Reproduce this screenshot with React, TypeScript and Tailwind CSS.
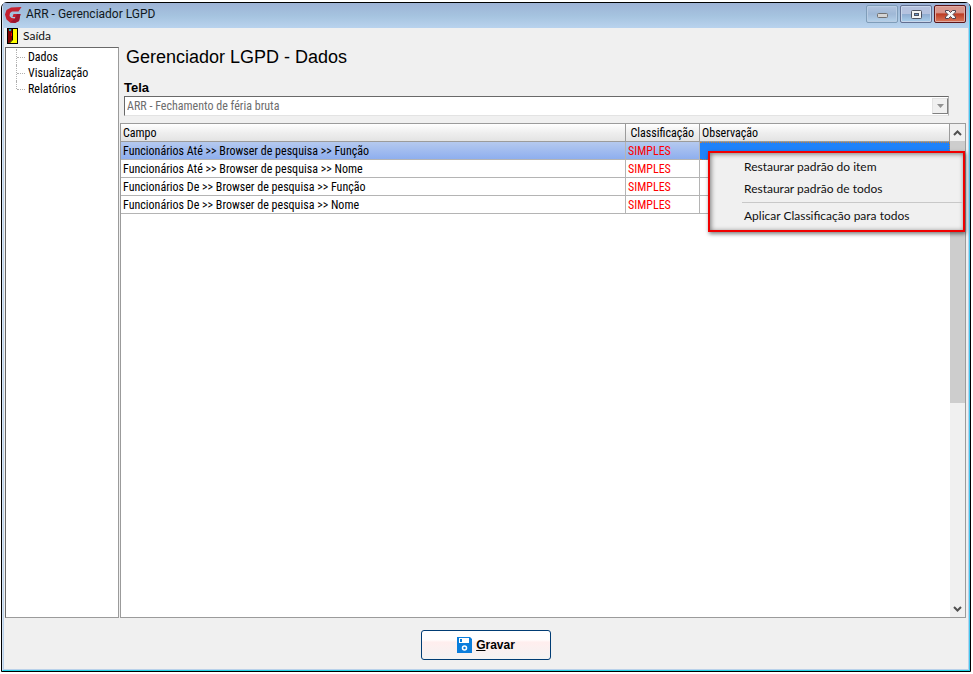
import React from 'react';

interface FieldRow {
  campo: string;
  classificacao: string;
}

const ROWS: FieldRow[] = [
  { campo: 'Funcionários Até >> Browser de pesquisa >> Função', classificacao: 'SIMPLES' },
  { campo: 'Funcionários Até >> Browser de pesquisa >> Nome', classificacao: 'SIMPLES' },
  { campo: 'Funcionários De >> Browser de pesquisa >> Função', classificacao: 'SIMPLES' },
  { campo: 'Funcionários De >> Browser de pesquisa >> Nome', classificacao: 'SIMPLES' },
];

const TREE_ITEMS = ['Dados', 'Visualização', 'Relatórios'];

const TitleBar: React.FC = () => (
  <header className="flex h-[25px] shrink-0 items-start bg-linear-to-b from-[#9db3d6] via-[#a5c3df] to-[#b9d3ee] pl-[2px] pr-[3px]">
    <svg className="mt-1 h-4 w-[17px]" viewBox="0 0 17 16" aria-hidden="true">
      <path d="M16.500 0 6 .500 1.500 3 0 7.500 1.500 12.500 5 15.500l5 .5 4-2L15.500 7H8.500L7.500 10h3l-.5 1.500-3.500-.500-2-2 .5-3 2-1.500h6.500z" fill="#c4202f" />
      <path d="M15.500 7 14 14l-4 2-5-.500 5-4 .5-1.500L12 7z" fill="#9c1530" />
    </svg>
    <h1 className="ml-1 mt-[2px] flex-1 font-['Roboto',sans-serif] text-[12px] leading-[18px] text-[#101820]">
      ARR - Gerenciador LGPD
    </h1>
    <div className="mt-[2px] flex gap-[2px]">
      <button
        type="button"
        aria-label="Minimizar"
        className="flex h-[18px] w-8 items-center justify-center rounded-[2px] border border-[#7f9db9] bg-linear-to-b from-[#b3c4df] via-[#9fb8d6] to-[#b5d2ea] shadow-[inset_0_0_0_1px_#b9cde4]"
      >
        <svg className="mt-[2px] h-[5px] w-[11px]" viewBox="0 0 11 5">
          <rect x=".5" y=".5" width="10" height="4" rx="1" fill="#d4d4d4" stroke="#707070" />
        </svg>
      </button>
      <button
        type="button"
        aria-label="Maximizar"
        className="flex h-[18px] w-8 items-center justify-center rounded-[2px] border border-[#626f91] bg-linear-to-b from-[#b5c2df] from-50% via-[#8fabd0] via-50% to-[#a9cfec] shadow-[inset_0_0_0_1px_#c8d6ea]"
      >
        <svg className="h-[9px] w-[11px]" viewBox="0 0 11 9">
          <rect x=".5" y=".5" width="10" height="8" rx="1" fill="#f4f4f4" stroke="#4d5261" />
          <rect x="3.500" y="3.500" width="4" height="2" fill="#6d98c9" stroke="#4d5261" />
        </svg>
      </button>
      <button
        type="button"
        aria-label="Fechar"
        className="flex h-[18px] w-8 items-center justify-center rounded-[2px] border border-[#5c1519] bg-linear-to-b from-[#d9978d] from-40% via-[#bd3c24] via-50% to-[#d9785a] shadow-[inset_0_0_0_1px_#e0aaa2]"
      >
        <svg className="h-[9px] w-[11px]" viewBox="0 0 11 9">
          <path d="M.5.5h3l2 2 2-2h3v1.500L8 4.500l2.500 2.500v1.500h-3l-2-2-2 2h-3V7L3 4.500.500 2z" fill="#f6f6f6" stroke="#4d4450" />
        </svg>
      </button>
    </div>
  </header>
);

const MenuBar: React.FC = () => (
  <nav className="flex h-[19px] shrink-0 items-start pl-[3px]">
    <button type="button" className="flex items-center gap-[5px] font-['Lato',sans-serif] text-[12px] leading-4 text-[#101010]">
      <svg className="h-4 w-[11px]" viewBox="0 0 11 16" aria-hidden="true">
        <rect x=".5" y=".5" width="10" height="15" fill="#ffff00" stroke="#000" />
        <path d="M1 1h4v11l-3 3H1z" fill="#800000" />
        <path d="M2 1h2v2H2z" fill="#00c0c0" />
        <path d="M5.500 1v11l-3 3" fill="none" stroke="#000" />
        <path d="M4.500 5v3" stroke="#ff0000" />
      </svg>
      Saída
    </button>
  </nav>
);

const TreePanel: React.FC = () => (
  <aside className="w-[114px] shrink-0 border border-[#9b9b9b] border-l-[#696969] border-t-[#696969] bg-white pl-[10px] pt-[1px]">
    <ul className="text-[12px] leading-4">
      {TREE_ITEMS.map((item, i) => (
        <li key={item} className="flex h-4">
          <span className={`border-l border-dotted border-[#b0b0b0] ${i === TREE_ITEMS.length - 1 ? 'h-2' : 'h-4'}`} />
          <span className="mr-[3px] mt-2 h-px w-2 border-t border-dotted border-[#b0b0b0]" />
          <button type="button" className="whitespace-nowrap leading-4">{item}</button>
        </li>
      ))}
    </ul>
  </aside>
);

const ScrollBar: React.FC = () => (
  <div className="flex w-[15px] shrink-0 flex-col bg-[#f0f0f0]">
    <button type="button" aria-label="Rolar para cima" className="flex h-[17px] items-center justify-center">
      <svg className="h-[6px] w-[9px]" viewBox="0 0 9 6">
        <path d="m1 5 3.500-3.500L8 5" fill="none" stroke="#505050" strokeWidth="2" />
      </svg>
    </button>
    <div className="flex-1">
      <div className="h-[57%] bg-[#cdcdcd]" />
    </div>
    <button type="button" aria-label="Rolar para baixo" className="flex h-[17px] items-center justify-center">
      <svg className="h-[6px] w-[9px]" viewBox="0 0 9 6">
        <path d="m1 1 3.500 3.500L8 1" fill="none" stroke="#505050" strokeWidth="2" />
      </svg>
    </button>
  </div>
);

const ContextMenu: React.FC = () => (
  <div
    role="menu"
    className="absolute right-0 top-[27px] w-[257px] border-2 border-[#f00000] bg-[#f0f0f0] py-[3px] font-['Lato',sans-serif] text-[12px] text-[#101010] shadow-[1px_2px_4px_rgba(0,0,0,0.5),inset_1px_1px_5px_rgba(0,0,0,0.5)]"
  >
    <button type="button" role="menuitem" className="block h-[22px] w-full pl-[34px] text-left">
      Restaurar padrão do item
    </button>
    <button type="button" role="menuitem" className="block h-[22px] w-full pl-[34px] text-left">
      Restaurar padrão de todos
    </button>
    <hr className="my-[2px] ml-8 border-[#c8c8c8]" />
    <button type="button" role="menuitem" className="block h-[22px] w-full pl-[34px] text-left">
      Aplicar Classificação para todos
    </button>
  </div>
);

const DataGrid: React.FC = () => (
  <div className="relative mt-[7px] flex flex-1 border border-[#9b9b9b] bg-white">
    <div className="flex-1">
      <table className="w-full table-fixed border-separate border-spacing-0 text-[12px] leading-4">
        <colgroup>
          <col />
          <col className="w-[74px]" />
          <col className="w-[250px]" />
        </colgroup>
        <thead>
          <tr className="h-[18px] bg-linear-to-b from-white via-[#eeeeee] to-[#e2e2e2]">
            <th className="border-b border-r border-[#9b9b9b] p-0 pl-[2px] text-left font-normal">Campo</th>
            <th className="border-b border-r border-[#9b9b9b] p-0 pr-[5px] text-right font-normal">Classificação</th>
            <th className="border-b border-r border-[#9b9b9b] p-0 pl-[2px] text-left font-normal">Observação</th>
          </tr>
        </thead>
        <tbody>
          {ROWS.map((row, i) => (
            <tr key={row.campo} className={`h-[18px] ${i === 0 ? 'bg-linear-to-b from-[#b5c9ef] to-[#8cadee]' : ''}`}>
              <td className="whitespace-nowrap border-b border-r border-[#b4b4b4] p-0 pl-[2px]">{row.campo}</td>
              <td className="border-b border-r border-[#b4b4b4] p-0 pl-[2px] text-[#ff0000]">{row.classificacao}</td>
              <td
                className={`border-b border-r p-0 ${i === 0 ? 'border-t border-dotted border-[#c08040] bg-[#1e82fa]' : 'border-[#b4b4b4]'}`}
              />
            </tr>
          ))}
        </tbody>
      </table>
    </div>
    <ScrollBar />
    <ContextMenu />
  </div>
);

const App: React.FC = () => {
  return (
    <div className="flex h-screen flex-col bg-white pb-[2px] pl-px pr-[2px] pt-[2px] font-['Roboto_Condensed','Liberation_Sans',sans-serif] text-black">
      <div className="flex flex-1 flex-col rounded-t-[6px] border border-black bg-[#b9d1ea]">
        <div className="flex flex-1 flex-col rounded-t-[5px] border-b border-l border-r border-b-[#22d3e6] border-l-[#d5e3f2] border-r-[#45c8ee]">
          <TitleBar />
          <div className="mx-px mb-px flex flex-1 flex-col bg-[#f0f0f0]">
            <MenuBar />
            <main className="flex flex-1 gap-px pl-px pr-[2px]">
              <TreePanel />
              <section className="flex min-w-0 flex-1 flex-col">
                <h2 className="pl-[6px] font-['Liberation_Sans',sans-serif] text-[18px] leading-[21px]">
                  Gerenciador LGPD - Dados
                </h2>
                <label htmlFor="tela" className="mt-3 pl-1 font-['Liberation_Sans',sans-serif] text-[13px] font-bold leading-4">
                  Tela
                </label>
                <div className="relative ml-1 mr-[17px] flex">
                  <select
                    id="tela"
                    disabled
                    className="h-5 w-full appearance-none border border-b-[#e3e3e3] border-l-[#696969] border-r-[#b0b0b0] border-t-[#696969] bg-white pl-[2px] text-[12px] leading-4 text-[#6d6d6d] opacity-100"
                  >
                    <option>ARR - Fechamento de féria bruta</option>
                  </select>
                  <span className="pointer-events-none absolute bottom-[2px] right-px top-[2px] flex w-4 items-center justify-center border border-b-[#808080] border-l-[#e3e3e3] border-r-[#808080] border-t-[#e3e3e3] bg-[#f0f0f0]">
                    <svg className="h-1 w-[7px]" viewBox="0 0 7 4">
                      <path d="M0 0h7L3.500 4z" fill="#929292" />
                    </svg>
                  </span>
                </div>
                <DataGrid />
              </section>
            </main>
            <footer className="flex h-[51px] shrink-0 items-start justify-center pt-3">
              <button
                type="button"
                className="flex h-[30px] w-[130px] items-center justify-center gap-1 rounded-[3px] border border-[#003c74] bg-linear-to-b from-white from-30% via-[#ffeeee] via-40% to-[#f3f3f3] font-['Liberation_Sans',sans-serif] text-[12px] font-bold"
              >
                <svg className="h-4 w-[15px]" viewBox="0 0 15 16" aria-hidden="true">
                  <path d="M0 0h13l2 2v14H0z" fill="#0a7ddc" />
                  <path d="M2 1h10v5H2z" fill="#fff" />
                  <path d="M3 2h2v3H3z" fill="#0a7ddc" />
                  <circle cx="7.500" cy="11" r="2" fill="#0a7ddc" stroke="#fff" strokeWidth="1.500" />
                </svg>
                <span>
                  <u>G</u>ravar
                </span>
              </button>
            </footer>
          </div>
        </div>
      </div>
    </div>
  );
};

export default App;
